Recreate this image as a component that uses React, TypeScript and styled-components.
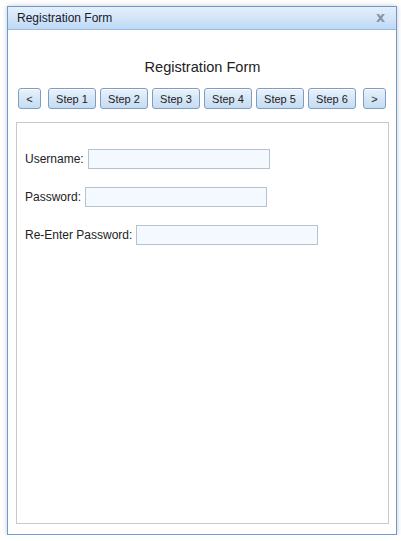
import React from "react";
import styled, { createGlobalStyle } from "styled-components";

const Global = createGlobalStyle`
  html, body { margin: 0; padding: 0; background: #ffffff; }
  body { font-family: "Liberation Sans", Arial, sans-serif; color: #222; }
`;

const Page = styled.div`
  padding: 6px 0 0 7px;
`;

const Window = styled.div`
  width: 388px;
  height: 527px;
  border: 1px solid #6b9bd0;
  background: #fff;
  box-shadow: 0 0 5px rgba(0, 0, 0, 0.22);
  display: flex;
  flex-direction: column;
`;

const TitleBar = styled.div`
  height: 22px;
  border-bottom: 1px solid #99bbe8;
  background: linear-gradient(to bottom, #e4effc 0%, #d3e5f9 50%, #bfd9f5 100%);
  display: flex;
  align-items: center;
  justify-content: space-between;
  padding: 0 11px 0 9px;
`;

const TitleText = styled.span`
  font-size: 12px;
  color: #15202b;
`;

const Close = styled.span`
  font-family: "DejaVu Sans", sans-serif;
  font-size: 14px;
  font-weight: bold;
  color: #8996a3;
  line-height: 1;
  margin-top: -3px;
`;

const Body = styled.div`
  flex: 1;
  display: flex;
  flex-direction: column;
  padding: 0 7px 10px 8px;
`;

const Heading = styled.h1`
  margin: 28px 0 0;
  font-size: 14.6px;
  font-weight: normal;
  line-height: 18px;
  text-align: center;
  color: #222;
`;

const StepBar = styled.div`
  display: flex;
  margin-top: 12px;
  padding-left: 2px;
`;

const StepGroup = styled.div`
  display: flex;
  gap: 4px;
  margin: 0 7px 0 7px;
`;

const NavButton = styled.button<{ $w: number }>`
  width: ${(p) => p.$w}px;
  height: 21px;
  box-sizing: border-box;
  border: 1px solid #7d9fc4;
  border-radius: 3px;
  background: linear-gradient(to bottom, #e9f2fb 0%, #d6e6f6 50%, #c7dcf2 100%);
  font-family: "Liberation Sans", Arial, sans-serif;
  font-size: 11px;
  color: #222;
  padding: 0;
  display: flex;
  align-items: center;
  justify-content: center;
  box-shadow: inset 0 1px 0 rgba(255, 255, 255, 0.7);
`;

const Panel = styled.div`
  margin-top: 13px;
  flex: 1;
  border: 1px solid #c8c8c8;
  padding: 26px 8px 0;
  display: flex;
  flex-direction: column;
  gap: 18px;
`;

const Row = styled.div`
  display: flex;
  align-items: center;
  gap: 4px;
  height: 20px;
`;

const Label = styled.label`
  font-size: 12px;
  color: #222;
`;

const Input = styled.input`
  width: 182px;
  height: 20px;
  box-sizing: border-box;
  border: 1px solid #b5c3d1;
  background: #f4f9ff;
  margin: 0;
  padding: 0 3px;
  font-family: "Liberation Sans", Arial, sans-serif;
  font-size: 12px;
`;

export default function App() {
  const steps = [1, 2, 3, 4, 5, 6];
  return (
    <>
      <Global />
      <Page>
        <Window>
          <TitleBar>
            <TitleText>Registration Form</TitleText>
            <Close>x</Close>
          </TitleBar>
          <Body>
            <Heading>Registration Form</Heading>
            <StepBar>
              <NavButton $w={23}>&lt;</NavButton>
              <StepGroup>
                {steps.map((s) => (
                  <NavButton key={s} $w={48}>
                    Step {s}
                  </NavButton>
                ))}
              </StepGroup>
              <NavButton $w={23}>&gt;</NavButton>
            </StepBar>
            <Panel>
              <Row>
                <Label>Username:</Label>
                <Input type="text" />
              </Row>
              <Row>
                <Label>Password:</Label>
                <Input type="password" />
              </Row>
              <Row>
                <Label>Re-Enter Password:</Label>
                <Input type="password" />
              </Row>
            </Panel>
          </Body>
        </Window>
      </Page>
    </>
  );
}
